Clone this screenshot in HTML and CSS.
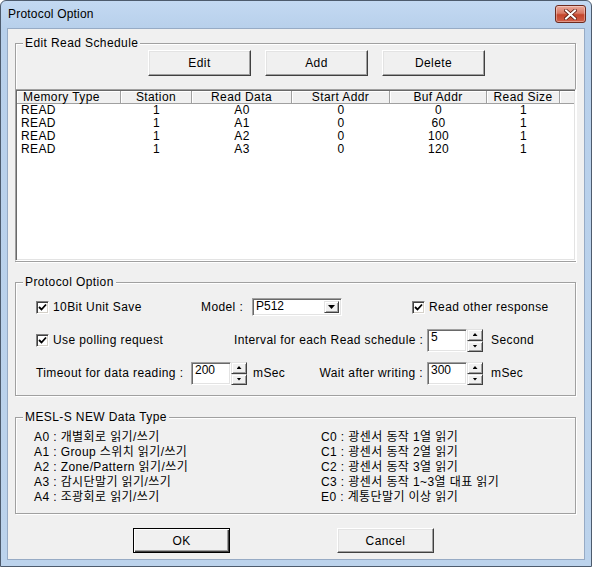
FILE: index.html
```html
<!DOCTYPE html>
<html>
<head>
<meta charset="utf-8">
<title>Protocol Option</title>
<link rel="stylesheet" href="styles.css">
</head>
<body>
<div class="window">
  <div class="titlebar">
    <span class="title">Protocol Option</span>
    <span class="close">
      <svg width="13" height="11" viewBox="0 0 13 11">
        <path d="M2 1.5 L11 9.5 M11 1.5 L2 9.5" stroke="#5a1a10" stroke-width="3.6" stroke-linecap="square"/>
        <path d="M2 1.5 L11 9.5 M11 1.5 L2 9.5" stroke="#ffffff" stroke-width="2" stroke-linecap="square"/>
      </svg>
    </span>
  </div>
  <div class="client">
    <div class="group g1">
      <div class="gtitle">Edit Read Schedule</div>
      <div class="btnrow">
        <div class="btn wide">Edit</div>
        <div class="btn wide">Add</div>
        <div class="btn wide">Delete</div>
      </div>
      <div class="list">
        <div class="lhead">
          <div class="hc left">Memory Type</div>
          <div class="hc">Station</div>
          <div class="hc">Read Data</div>
          <div class="hc">Start Addr</div>
          <div class="hc">Buf Addr</div>
          <div class="hc">Read Size</div>
          <div class="hc last"></div>
        </div>
        <div class="lrow"><span class="left">READ</span><span>1</span><span>A0</span><span>0</span><span>0</span><span>1</span><span></span></div>
        <div class="lrow"><span class="left">READ</span><span>1</span><span>A1</span><span>0</span><span>60</span><span>1</span><span></span></div>
        <div class="lrow"><span class="left">READ</span><span>1</span><span>A2</span><span>0</span><span>100</span><span>1</span><span></span></div>
        <div class="lrow"><span class="left">READ</span><span>1</span><span>A3</span><span>0</span><span>120</span><span>1</span><span></span></div>
      </div>
    </div>

    <div class="group g2">
      <div class="gtitle">Protocol Option</div>
      <div class="prow r1">
        <label class="chk w165"><span class="cb"><svg width="9" height="9" viewBox="0 0 9 9"><path d="M1 4 L3.5 6.5 L8 1.5" fill="none" stroke="#000" stroke-width="1.8"/></svg></span>10Bit Unit Save</label>
        <span class="lbl w51">Model :</span>
        <div class="combo"><span class="ctext">P512</span><span class="cbtn"><i class="tri-dn"></i></span></div>
        <label class="chk ml70"><span class="cb"><svg width="9" height="9" viewBox="0 0 9 9"><path d="M1 4 L3.5 6.5 L8 1.5" fill="none" stroke="#000" stroke-width="1.8"/></svg></span>Read other response</label>
      </div>
      <div class="prow r2">
        <label class="chk w198"><span class="cb"><svg width="9" height="9" viewBox="0 0 9 9"><path d="M1 4 L3.5 6.5 L8 1.5" fill="none" stroke="#000" stroke-width="1.8"/></svg></span>Use polling request</label>
        <span class="lbl w193 right">Interval for each Read schedule :</span>
        <div class="spin"><div class="edit">5</div><div class="sbtns"><span class="sb"><i class="tri-up"></i></span><span class="sb"><i class="tri-dn"></i></span></div></div>
        <span class="lbl unit">Second</span>
      </div>
      <div class="prow r3">
        <span class="lbl w155">Timeout for data reading :</span>
        <div class="spin"><div class="edit">200</div><div class="sbtns"><span class="sb"><i class="tri-up"></i></span><span class="sb"><i class="tri-dn"></i></span></div></div>
        <span class="lbl w72">mSec</span>
        <span class="lbl w108 right">Wait after writing :</span>
        <div class="spin"><div class="edit">300</div><div class="sbtns"><span class="sb"><i class="tri-up"></i></span><span class="sb"><i class="tri-dn"></i></span></div></div>
        <span class="lbl unit">mSec</span>
      </div>
    </div>

    <div class="group g3">
      <div class="gtitle">MESL-S NEW Data Type</div>
      <div class="mesl">
        <div class="mcol left">
          <div>A0 : 개별회로 읽기/쓰기</div>
          <div>A1 : Group 스위치 읽기/쓰기</div>
          <div>A2 : Zone/Pattern 읽기/쓰기</div>
          <div>A3 : 감시단말기 읽기/쓰기</div>
          <div>A4 : 조광회로 읽기/쓰기</div>
        </div>
        <div class="mcol">
          <div>C0 : 광센서 동작 1열 읽기</div>
          <div>C1 : 광센서 동작 2열 읽기</div>
          <div>C2 : 광센서 동작 3열 읽기</div>
          <div>C3 : 광센서 동작 1~3열 대표 읽기</div>
          <div>E0 : 계통단말기 이상 읽기</div>
        </div>
      </div>
    </div>

    <div class="okrow">
      <div class="btn dlg default">OK</div>
      <div class="btn dlg">Cancel</div>
    </div>
  </div>
</div>
</body>
</html>
```
FILE: styles.css
```css
* { box-sizing: border-box; }
html, body { margin: 0; padding: 0; }
body {
  width: 592px;
  height: 567px;
  overflow: hidden;
  background: #ffffff;
  font-family: "Liberation Sans", "Noto Sans CJK KR", sans-serif;
  font-size: 12px;
  color: #000;
}
.window {
  width: 592px;
  height: 567px;
  border: 1px solid #4d5b6d;
  border-radius: 6px 6px 0 0;
  background: linear-gradient(#c3d9f2 0, #b8d0eb 27px, #bcd3ec 100%);
  padding: 0 6px 6px 6px;
  display: flex;
  flex-direction: column;
}
.titlebar {
  height: 27px;
  display: flex;
  justify-content: space-between;
  align-items: flex-start;
}
.title {
  margin: 6px 0 0 1px;
  line-height: 14px;
  font-size: 12px;
  letter-spacing: 0.2px;
}
.close {
  margin: 4px -1px 0 0;
  width: 31px;
  height: 18px;
  border: 1px solid #6d2a1e;
  border-radius: 3px;
  background: linear-gradient(#e9a99a 0%, #d97a66 45%, #c4452c 55%, #d1604a 100%);
  box-shadow: inset 0 0 0 1px rgba(255,255,255,0.35);
  display: flex;
  align-items: center;
  justify-content: center;
}
.client {
  flex: 1;
  background: #f0f0f0;
  border: 1px solid #97abc5;
  padding: 0 8px 0 7px;
  display: flex;
  flex-direction: column;
  letter-spacing: 0.4px;
}
.group {
  border: 1px solid #a0a0a0;
  box-shadow: inset 1px 1px 0 #ffffff, 1px 1px 0 #ffffff;
}
.gtitle {
  margin: -8px 0 0 7px;
  padding: 0 2px;
  width: max-content;
  height: 14px;
  line-height: 14px;
  background: #f0f0f0;
}
.g1 { margin-top: 14px; }
.g2 { margin-top: 20px; padding-bottom: 10px; }
.g3 { margin-top: 21px; padding-bottom: 8px; }

.btnrow {
  display: flex;
  gap: 14px;
  padding-left: 132px;
}
.btn {
  background: #f0f0f0;
  border: 1px solid;
  border-color: #ffffff #404040 #404040 #ffffff;
  box-shadow: inset -1px -1px 0 #a0a0a0, inset 1px 1px 0 #e3e3e3;
  display: flex;
  align-items: center;
  justify-content: center;
  line-height: 14px;
}
.btn.wide { width: 103px; height: 26px; }
.btn.dlg { width: 97px; height: 25px; }
.btn.default {
  border-color: #000;
  box-shadow: inset 1px 1px 0 #ffffff, inset -1px -1px 0 #404040, inset -2px -2px 0 #a0a0a0;
}

.list {
  margin: 13px -1px 0 -1px;
  height: 172px;
  background: #fff;
  border: 1px solid;
  border-color: #a0a0a0 #ffffff #ffffff #a0a0a0;
  box-shadow: inset 1px 1px 0 #696969, inset -1px -1px 0 #e3e3e3;
  padding: 1px;
}
.lhead, .lrow {
  display: grid;
  grid-template-columns: 104px 71px 100px 98px 97px 73px 1fr;
}
.lhead { height: 13px; }
.hc {
  background: #f0f0f0;
  border-right: 1px solid #a0a0a0;
  border-bottom: 1px solid #a0a0a0;
  box-shadow: inset 1px 1px 0 #ffffff;
  line-height: 12px;
  text-align: center;
  white-space: nowrap;
}
.hc.left { text-align: left; padding-left: 6px; }
.hc.last { border-right: none; }
.lrow span {
  line-height: 13px;
  height: 13px;
  text-align: center;
}
.lrow span.left { text-align: left; padding-left: 4px; }

.prow {
  display: flex;
  align-items: center;
  padding-left: 20px;
  white-space: nowrap;
}
.r1 { margin-top: 8px; height: 20px; }
.r2 { margin-top: 11px; height: 24px; }
.r3 { margin-top: 9px; height: 24px; }

.chk {
  display: flex;
  align-items: center;
  gap: 4px;
  line-height: 14px;
}
.cb {
  width: 13px;
  height: 13px;
  background: #fff;
  border: 1px solid;
  border-color: #808080 #ffffff #ffffff #808080;
  box-shadow: inset 1px 1px 0 #404040, inset -1px -1px 0 #d4d0c8;
  display: flex;
  align-items: center;
  justify-content: center;
}
.w165 { width: 165px; }
.w198 { width: 198px; }
.w51 { width: 51px; }
.w193 { width: 193px; }
.w155 { width: 155px; }
.w72 { width: 72px; padding-left: 6px; }
.w108 { width: 108px; }
.ml70 { margin-left: 70px; }
.lbl { line-height: 14px; }
.lbl.right { text-align: right; padding-right: 4px; }
.lbl.unit { margin-left: 8px; }

.combo {
  width: 90px;
  height: 18px;
  background: #fff;
  border: 1px solid;
  border-color: #a0a0a0 #ffffff #ffffff #a0a0a0;
  box-shadow: inset 1px 1px 0 #696969, inset -1px -1px 0 #e3e3e3;
  padding: 2px;
  display: flex;
  justify-content: space-between;
}
.ctext { line-height: 11px; padding-left: 1px; letter-spacing: 0; }
.cbtn, .sb {
  background: #f0f0f0;
  border: 1px solid;
  border-color: #e3e3e3 #404040 #404040 #e3e3e3;
  box-shadow: inset 1px 1px 0 #ffffff, inset -1px -1px 0 #a0a0a0;
  display: flex;
  align-items: center;
  justify-content: center;
}
.cbtn { width: 15px; height: 12px; }
.tri-dn, .tri-up {
  display: block;
  width: 5px;
  height: 3px;
  background: #000;
}
.tri-dn { clip-path: polygon(0 0, 100% 0, 50% 100%); }
.tri-up { clip-path: polygon(50% 0, 100% 100%, 0 100%); }
.cbtn .tri-dn { width: 7px; height: 4px; }

.spin {
  display: flex;
  height: 23px;
}
.edit {
  width: 40px;
  height: 23px;
  background: #fff;
  border: 1px solid;
  border-color: #a0a0a0 #ffffff #ffffff #a0a0a0;
  box-shadow: inset 1px 1px 0 #696969, inset -1px -1px 0 #e3e3e3;
  padding: 1px 3px;
  line-height: 13px;
  letter-spacing: 0;
}
.sbtns {
  width: 16px;
  display: flex;
  flex-direction: column;
}
.sb { height: 12px; }
.sb + .sb { height: 11px; }

.mesl {
  display: flex;
  margin-top: 6px;
  padding-left: 18px;
}
.mcol div { line-height: 15px; height: 15px; white-space: nowrap; }
.mcol.left { width: 287px; }

.okrow {
  display: flex;
  gap: 107px;
  padding-left: 118px;
  margin-top: 14px;
}
```
